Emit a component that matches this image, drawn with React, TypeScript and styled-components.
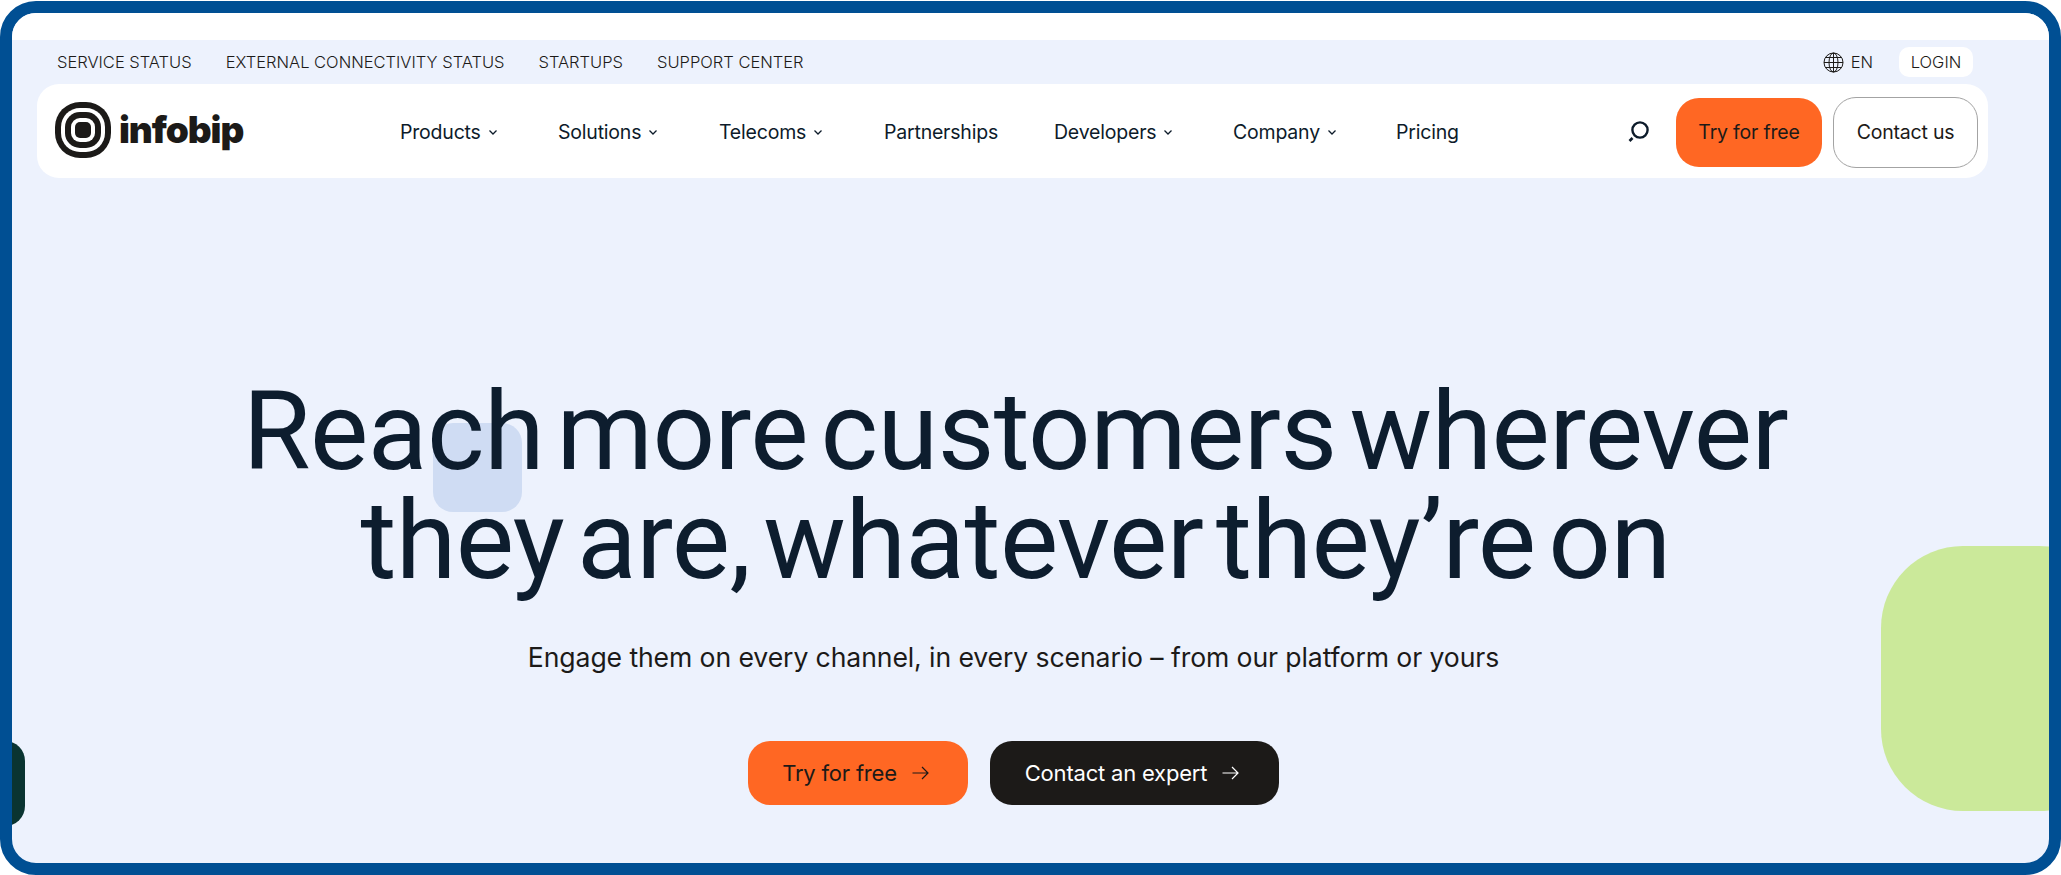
import React from "react";
import styled, { createGlobalStyle } from "styled-components";

const Global = createGlobalStyle`
  html, body { margin: 0; padding: 0; background: #fff; }
  * { box-sizing: border-box; }
  body { font-family: Inter, "Liberation Sans", sans-serif; color: #0d1b2a; }
`;

const Frame = styled.div`
  position: relative;
  width: 2061px;
  height: 874px;
  margin-top: 1px;
  border: 12px solid #004f93;
  border-radius: 36px;
  background: #edf2fd;
  overflow: hidden;
  display: flex;
  flex-direction: column;
`;
const WhiteBand = styled.div`
  height: 27px;
  background: #fff;
  flex: none;
`;
const TopBar = styled.div`
  height: 44px;
  flex: none;
  display: flex;
  align-items: center;
  padding: 0 76px 0 45px;
  font-size: 16.5px;
  color: #1c1a18;
`;
const TopLink = styled.span`
  margin-right: 34px;
  font-weight: 300;
`;
const TopRight = styled.div`
  margin-left: auto;
  display: flex;
  align-items: center;
`;
const Lang = styled.span`
  display: flex;
  align-items: center;
  gap: 7px;
  font-weight: 300;
  margin-right: 26px;
`;
const Login = styled.span`
  width: 74px;
  height: 30px;
  border-radius: 10px;
  background: #fff;
  display: flex;
  align-items: center;
  justify-content: center;
  font-weight: 300;
`;
const Nav = styled.nav`
  width: 1951px;
  height: 94px;
  margin-left: 25px;
  flex: none;
  background: #fff;
  border-radius: 22px;
  display: flex;
  align-items: center;
  padding: 0 10px 0 18px;
  position: relative;
  z-index: 2;
`;
const Logo = styled.div`
  display: flex;
  align-items: center;
  gap: 8px;
  width: 345px;
  flex: none;
  margin-top: -3px;
`;
const LogoText = styled.span`
  font-family: Inter, sans-serif;
  font-weight: 900;
  font-size: 37px;
  letter-spacing: -1.1px;
  color: #1c1a18;
`;
const NavLinks = styled.div`
  display: flex;
  align-items: center;
  flex: 1;
  margin-top: 2px;
`;
const NavLink = styled.span<{ $w: number }>`
  display: flex;
  align-items: center;
  gap: 7px;
  width: ${(p) => p.$w}px;
  font-size: 19.5px;
  color: #0d1b2a;
  letter-spacing: -0.2px;
  white-space: nowrap;
`;
const SearchBtn = styled.span`
  display: flex;
  margin: 2px 26px 0 0;
`;
const NavBtn = styled.span<{ $primary?: boolean }>`
  height: ${(p) => (p.$primary ? 69 : 71)}px;
  width: ${(p) => (p.$primary ? 146 : 145)}px;
  margin-left: ${(p) => (p.$primary ? 0 : 11)}px;
  margin-top: 2px;
  border-radius: 23px;
  display: flex;
  align-items: center;
  justify-content: center;
  font-size: 19.5px;
  letter-spacing: -0.2px;
  background: ${(p) => (p.$primary ? "#ff6723" : "#fff")};
  border: ${(p) => (p.$primary ? "none" : "1.5px solid #a3a3a3")};
  color: #1c1a18;
`;
const Hero = styled.main`
  flex: 1;
  display: flex;
  flex-direction: column;
  align-items: center;
  width: 1951px;
  margin-left: 25px;
  padding-top: 199px;
  position: relative;
`;
const Title = styled.h1`
  margin: 0 0 0 6px;
  font-family: Roboto, "Liberation Sans", sans-serif;
  font-weight: 400;
  font-size: 110px;
  line-height: 109px;
  letter-spacing: -0.6px;
  word-spacing: -14px;
  color: #0d1d2e;
  text-align: center;
  white-space: nowrap;
  position: relative;
  z-index: 1;
`;
const Sub = styled.p`
  margin: 45px 0 0 2px;
  font-size: 26.6px;
  line-height: 34px;
  letter-spacing: -0.1px;
  color: #1c1a18;
`;
const Cta = styled.div`
  display: flex;
  gap: 22px;
  margin-top: 67px;
  margin-left: 1px;
`;
const CtaBtn = styled.span<{ $dark?: boolean }>`
  height: 64px;
  width: ${(p) => (p.$dark ? 289 : 220)}px;
  border-radius: 22px;
  padding-right: 4px;
  display: flex;
  align-items: center;
  justify-content: center;
  gap: 15px;
  font-size: 22px;
  letter-spacing: -0.2px;
  background: ${(p) => (p.$dark ? "#1c1a18" : "#ff6723")};
  color: ${(p) => (p.$dark ? "#fff" : "#1c1a18")};
`;
const BlueBlob = styled.div`
  position: absolute;
  left: 421px;
  top: 410px;
  width: 89px;
  height: 89px;
  border-radius: 20px;
  background: #cfdcf3;
`;
const GreenBlob = styled.div`
  position: absolute;
  left: 1869px;
  top: 533px;
  width: 240px;
  height: 265px;
  border-radius: 82px;
  background: #cbe99a;
`;
const TealBlob = styled.div`
  position: absolute;
  left: -60px;
  top: 728px;
  width: 73px;
  height: 85px;
  border-radius: 20px;
  background: #0a3431;
`;

const Chevron = () => (
  <svg width="10" height="7" viewBox="0 0 10 7" fill="none" stroke="#0d1b2a" strokeWidth="1.3">
    <path d="M1.5 1.5 5 5l3.5-3.5" />
  </svg>
);
const Arrow = ({ color }: { color: string }) => (
  <svg width="17" height="14" viewBox="0 0 17 14" fill="none" stroke={color} strokeWidth="1.2">
    <path d="M.5 7h15.5M10 1l6 6-6 6" />
  </svg>
);
const Globe = () => (
  <svg width="21" height="21" viewBox="0 0 21 21" fill="none" stroke="#1c1a18" strokeWidth="1">
    <circle cx="10.5" cy="10.5" r="9.5" />
    <ellipse cx="10.5" cy="10.5" rx="4.5" ry="9.5" />
    <path d="M10.5 1v19M1 10.5h19M2.4 5.5h16.2M2.4 15.5h16.2" />
  </svg>
);
const Search = () => (
  <svg width="24" height="24" viewBox="0 0 24 24" fill="none" stroke="#0d1b2a">
    <circle cx="14" cy="10" r="7.6" strokeWidth="2.4" />
    <path d="M3.5 21l3-3" strokeWidth="2.6" />
  </svg>
);
const LogoMark = () => (
  <svg width="56" height="56" viewBox="0 0 56 56">
    <rect x="0" y="0" width="56" height="56" rx="25" fill="#1c1a18" />
    <rect x="6" y="6" width="44" height="44" rx="19" fill="#fff" />
    <rect x="10" y="10" width="36" height="36" rx="15" fill="#1c1a18" />
    <rect x="16" y="16" width="24" height="24" rx="9" fill="#fff" />
    <rect x="20" y="20" width="16" height="16" rx="5" fill="#1c1a18" />
  </svg>
);

const links: { t: string; w: number; c?: boolean }[] = [
  { t: "Products", w: 158, c: true },
  { t: "Solutions", w: 161, c: true },
  { t: "Telecoms", w: 165, c: true },
  { t: "Partnerships", w: 170, c: false },
  { t: "Developers", w: 179, c: true },
  { t: "Company", w: 163, c: true },
  { t: "Pricing", w: 100, c: false },
];

export default function App() {
  return (
    <>
      <Global />
      <Frame>
        <WhiteBand />
        <TopBar>
          <TopLink>SERVICE STATUS</TopLink>
          <TopLink>EXTERNAL CONNECTIVITY STATUS</TopLink>
          <TopLink>STARTUPS</TopLink>
          <TopLink>SUPPORT CENTER</TopLink>
          <TopRight>
            <Lang>
              <Globe />
              EN
            </Lang>
            <Login>LOGIN</Login>
          </TopRight>
        </TopBar>
        <Nav>
          <Logo>
            <LogoMark />
            <LogoText>infobip</LogoText>
          </Logo>
          <NavLinks>
            {links.map((l) => (
              <NavLink key={l.t} $w={l.w}>
                {l.t}
                {l.c && <Chevron />}
              </NavLink>
            ))}
          </NavLinks>
          <SearchBtn>
            <Search />
          </SearchBtn>
          <NavBtn $primary>Try for free</NavBtn>
          <NavBtn>Contact us</NavBtn>
        </Nav>
        <Hero>
          <Title>
            Reach more customers wherever
            <br />
            they are, whatever they’re on
          </Title>
          <Sub>Engage them on every channel, in every scenario – from our platform or yours</Sub>
          <Cta>
            <CtaBtn>
              Try for free <Arrow color="#1c1a18" />
            </CtaBtn>
            <CtaBtn $dark>
              Contact an expert <Arrow color="#fff" />
            </CtaBtn>
          </Cta>
        </Hero>
        <BlueBlob />
        <GreenBlob />
        <TealBlob />
      </Frame>
    </>
  );
}
